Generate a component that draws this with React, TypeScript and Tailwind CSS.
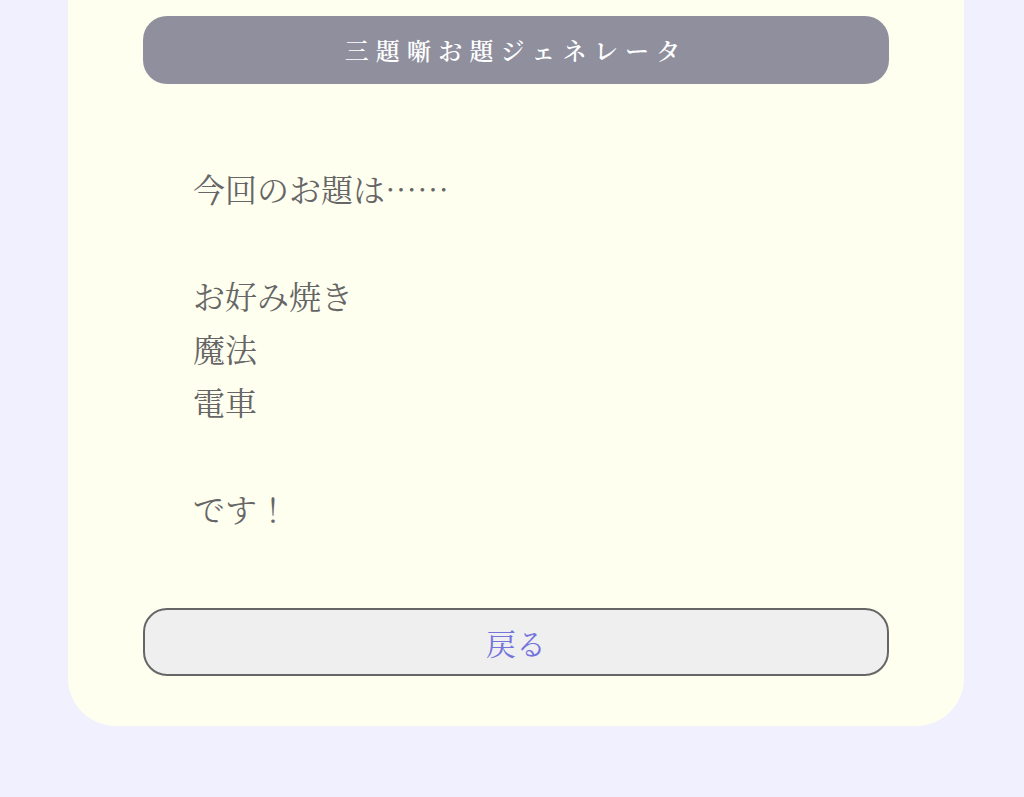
const SERIF = '"Noto Serif CJK JP", "Noto Serif JP", "Liberation Serif", "Noto Sans CJK JP", serif'

const TOPICS = ['お好み焼き', '魔法', '電車']

export default function App() {
  return (
    <div className="min-h-[797px] bg-[#f0f0ff]" style={{ fontFamily: SERIF }}>
      <div className="ml-[68px] w-[896px] rounded-b-[48px] bg-[#fffff0] px-[75px] pt-4 pb-[50px]">
        <header className="flex h-[68px] items-center justify-center rounded-[24px] bg-[#8f8f9e]">
          <h1 className="text-[24px] font-semibold tracking-[0.3em] text-white">三題噺お題ジェネレータ</h1>
        </header>

        <div className="mt-[78px] px-[50px] text-[32px] leading-[53.3px] text-[#666666]">
          <p>今回のお題は……</p>
          <p>&nbsp;</p>
          {TOPICS.map((t) => (
            <p key={t}>{t}</p>
          ))}
          <p>&nbsp;</p>
          <p>です！</p>
        </div>

        <button
          type="button"
          className="mt-[73px] flex h-[68px] w-full items-center justify-center rounded-[24px] border-2 border-[#666666] bg-[#efefef] text-[30px] text-[#7474dc]"
        >
          戻る
        </button>
      </div>
    </div>
  )
}
